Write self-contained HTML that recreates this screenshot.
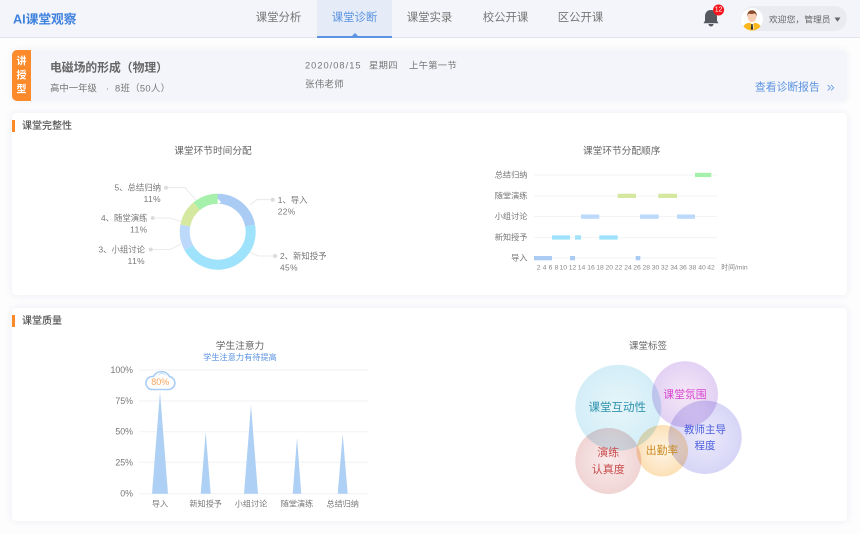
<!DOCTYPE html>
<html lang="zh">
<head>
<meta charset="utf-8">
<title>AI课堂观察</title>
<style>
html,body{margin:0;padding:0;width:860px;height:534px;overflow:hidden;background:#fdfdfe;}
body{position:relative;font-family:"Liberation Sans","Noto Sans CJK SC",sans-serif;color:#666;filter:blur(.3px);}
div{position:absolute;box-sizing:border-box;}
.hdr{left:0;top:0;width:860px;height:38px;background:#f4f5fa;border-bottom:1px solid #e2e3e8;}
.tab{top:0;height:38px;line-height:37px;font-size:11.4px;color:#777;text-align:center;width:75px;}
.tab.on{background:#e5ecf7;color:#5b93e0;border-bottom:2px solid #5b93e0;}
.card{background:#fff;border-radius:4px;box-shadow:0 0 8px rgba(60,70,110,.09);}
svg{position:absolute;left:0;top:0;}
text{font-family:"Liberation Sans","Noto Sans CJK SC",sans-serif;dominant-baseline:central;}
.b{mix-blend-mode:multiply;opacity:.88;}
</style>
</head>
<body>
<div class="hdr"></div>
<div class="tab" style="left:241px">课堂分析</div>
<div class="tab on" style="left:317px">课堂诊断</div>
<div class="tab" style="left:392px">课堂实录</div>
<div class="tab" style="left:468px">校公开课</div>
<div class="tab" style="left:543px">区公开课</div>
<div style="left:741px;top:6px;width:106px;height:25px;border-radius:13px;background:#eaebf1"></div>
<div style="left:12px;top:50px;width:835px;height:51px;background:#f4f5fa;border-radius:5px;box-shadow:0 0 7px rgba(60,70,110,.07)"></div>
<div style="left:12px;top:50px;width:19px;height:51px;background:#fd8a2a;border-radius:5px 0 0 5px"></div>
<div class="card" style="left:12px;top:113px;width:835px;height:182px"></div>
<div class="card" style="left:12px;top:308px;width:835px;height:213px"></div>
<div style="left:12px;top:120px;width:3px;height:12px;background:#fd8a2a"></div>
<div style="left:12px;top:315px;width:3px;height:12px;background:#fd8a2a"></div>

<svg width="860" height="534" viewBox="0 0 860 534" xmlns="http://www.w3.org/2000/svg">
<defs>
<radialGradient id="g1"><stop offset="0" stop-color="#e4f5fa"/><stop offset="1" stop-color="#cdebf6"/></radialGradient>
<radialGradient id="g2"><stop offset="0" stop-color="#f5e4f5"/><stop offset="1" stop-color="#dfcbf3"/></radialGradient>
<radialGradient id="g3"><stop offset="0" stop-color="#e9e7fa"/><stop offset="1" stop-color="#d2d0f5"/></radialGradient>
<radialGradient id="g4"><stop offset="0" stop-color="#fae8e8"/><stop offset="1" stop-color="#efcfcf"/></radialGradient>
<radialGradient id="g5"><stop offset="0" stop-color="#fef5e4"/><stop offset="1" stop-color="#fcdcac"/></radialGradient>
</defs>

<!-- header -->
<text x="13" y="19.5" font-size="12.7" font-weight="700" fill="#3f82de">AI课堂观察</text>
<path d="M352 36l3-3 3 3z" fill="#5b93e0"/>
<!-- bell -->
<path d="M711 10c-4.200 0-6 3-6 6.500v4.300l-1.500 2.400h15l-1.500-2.400v-4.300c0-3.500-1.800-6.500-6-6.500z" fill="#55585f"/>
<path d="M708.500 24h5a2.500 2.500 0 0 1-5 0z" fill="#55585f"/>
<circle cx="718.600" cy="10" r="5.500" fill="#f5141c"/>
<text x="718.600" y="10" font-size="7" fill="#fff" text-anchor="middle">12</text>
<!-- avatar -->
<circle cx="752" cy="19" r="11" fill="#fff"/>
<path d="M743.500 26.500c1-3 4-3.800 8.500-3.800s7.500.8 8.500 3.800a11 11 0 0 1-17 0z" fill="#fbb81e"/>
<path d="M749.500 22.500h5l-1.200 1.600.6 4.500-1.400 1.200-1.400-1.200.6-4.500z" fill="#fff"/>
<path d="M751.400 24h1.200l.5 5-1.100.9-1.100-.9z" fill="#2b2b2b"/>
<ellipse cx="752" cy="17" rx="4.300" ry="5.200" fill="#f6cdb1"/>
<path d="M747.300 17c-.6-4.500 1.900-6.800 4.700-6.800s5.300 2.300 4.700 6.800c-.4-2.200-1.100-3.200-2.200-3.600-1.700.8-4.800.6-5.800.4-.8.600-1.200 1.500-1.400 3.200z" fill="#8a4a2a"/>
<text x="769" y="19.500" font-size="8.800" fill="#666">欢迎您&#xFF0C;管理员</text>
<path d="M834.500 17.500h6l-3 4.200z" fill="#666"/>

<!-- info -->
<text x="21.500" y="62" font-size="10" font-weight="700" fill="#fff" text-anchor="middle">讲</text>
<text x="21.500" y="76" font-size="10" font-weight="700" fill="#fff" text-anchor="middle">授</text>
<text x="21.500" y="90" font-size="10" font-weight="700" fill="#fff" text-anchor="middle">型</text>
<text x="50" y="67.500" font-size="11.800" font-weight="700" fill="#666">电磁场的形成&#xFF08;物理&#xFF09;</text>
<g font-size="9.400" fill="#777">
<text x="50" y="88">高中一年级</text>
<text x="106" y="88">·</text>
<text x="115" y="88" letter-spacing=".3">8班&#xFF08;50人&#xFF09;</text>
</g>
<g font-size="9.300" fill="#777">
<text x="305" y="65.500" letter-spacing="1">2020/08/15</text>
<text x="369" y="65.500" letter-spacing=".3">星期四</text>
<text x="409" y="65.500" letter-spacing=".3">上午第一节</text>
</g>
<text x="305" y="85" font-size="9.500" fill="#777" letter-spacing=".2">张伟老师</text>
<text x="755" y="87.500" font-size="10.800" fill="#5b93e0">查看诊断报告</text>
<path d="M827.700 85l2.700 2.700-2.700 2.700M831 85l2.700 2.700-2.700 2.700" fill="none" stroke="#6d9fe4" stroke-width=".9"/>

<!-- section titles -->
<text x="22" y="126.500" font-size="10" font-weight="500" fill="#555">课堂完整性</text>
<text x="22" y="321.500" font-size="10" font-weight="500" fill="#555">课堂质量</text>

<!-- donut -->
<text x="213" y="151.500" font-size="9.700" fill="#666" text-anchor="middle">课堂环节时间分配</text>
<g transform="rotate(-90 217.700 231.700)" fill="none" stroke-width="10">
<circle cx="217.700" cy="231.700" r="33" pathLength="100" stroke="#aaccf4" stroke-dasharray="22 78"/>
<circle cx="217.700" cy="231.700" r="33" pathLength="100" stroke="#9ee2fb" stroke-dasharray="45 55" stroke-dashoffset="-22"/>
<circle cx="217.700" cy="231.700" r="33" pathLength="100" stroke="#bcd9fb" stroke-dasharray="11 89" stroke-dashoffset="-67"/>
<circle cx="217.700" cy="231.700" r="33" pathLength="100" stroke="#d5e8a0" stroke-dasharray="11 89" stroke-dashoffset="-78"/>
<circle cx="217.700" cy="231.700" r="33" pathLength="100" stroke="#a5f0aa" stroke-dasharray="11 89" stroke-dashoffset="-89"/>
</g>
<g fill="none" stroke="#e6e6e6" stroke-width=".8">
<path d="M250 205l7-5.300h15.500"/><path d="M250 252l8 4h17"/><path d="M181 244l-11 5.500h-19"/><path d="M182 222l-12-4h-17"/><path d="M196 200l-11-12.300h-19"/>
</g>
<g fill="#dcdcdc">
<circle cx="272.700" cy="199.700" r="2"/><circle cx="275" cy="256" r="2"/><circle cx="150.700" cy="249.500" r="2"/><circle cx="152.700" cy="218" r="2"/><circle cx="166" cy="187.700" r="2"/>
</g>
<g font-size="8.400" fill="#777">
<text x="277.700" y="200">1、导入</text><text x="277.700" y="211.500" letter-spacing=".4">22%</text>
<text x="280" y="256">2、新知授予</text><text x="280" y="267.500" letter-spacing=".4">45%</text>
<text x="145" y="249.500" text-anchor="end">3、小组讨论</text><text x="145" y="261" text-anchor="end" letter-spacing=".4">11%</text>
<text x="147.500" y="218" text-anchor="end">4、随堂演练</text><text x="147.500" y="229.500" text-anchor="end" letter-spacing=".4">11%</text>
<text x="161" y="187.700" text-anchor="end">5、总结归纳</text><text x="161" y="199" text-anchor="end" letter-spacing=".4">11%</text>
</g>

<!-- gantt -->
<text x="621.700" y="151.500" font-size="9.700" fill="#666" text-anchor="middle">课堂环节分配顺序</text>
<g stroke="#f2f3f5" stroke-width="1">
<path d="M534 175h183M534 196h183M534 216.500h183M534 237.500h183M534 258h183"/>
</g>
<g font-size="8.200" fill="#777" text-anchor="end">
<text x="527.500" y="175">总结归纳</text><text x="527.500" y="196">随堂演练</text><text x="527.500" y="216.700">小组讨论</text><text x="527.500" y="237.300">新知授予</text><text x="527.500" y="258">导入</text>
</g>
<g fill="#aaccf4"><rect x="534" y="256" width="18" height="4.300"/><rect x="570" y="256" width="5" height="4.300"/><rect x="635.700" y="256" width="4.600" height="4.300"/></g>
<g fill="#9ee2fb"><rect x="552" y="235.300" width="18" height="4.300"/><rect x="575" y="235.300" width="6" height="4.300"/><rect x="599.300" y="235.300" width="18.400" height="4.300"/></g>
<g fill="#bcd9fb"><rect x="581" y="214.500" width="18.300" height="4.300"/><rect x="640" y="214.500" width="18.700" height="4.300"/><rect x="677" y="214.500" width="18" height="4.300"/></g>
<g fill="#d5e8a0"><rect x="617.700" y="193.700" width="18.300" height="4.300"/><rect x="658.300" y="193.700" width="18.700" height="4.300"/></g>
<rect x="695" y="172.800" width="16.300" height="4.300" fill="#a5f0aa"/>
<g font-size="6.800" fill="#888" text-anchor="middle">
<text x="538.700" y="268">2</text><text x="544.600" y="268">4</text><text x="550.500" y="268">6</text><text x="556.500" y="268">8</text><text x="563.300" y="268">10</text><text x="572.500" y="268">12</text><text x="581.500" y="268">14</text><text x="591" y="268">16</text><text x="600" y="268">18</text><text x="609.300" y="268">20</text><text x="618.500" y="268">22</text><text x="628" y="268">24</text><text x="637" y="268">26</text><text x="646.300" y="268">28</text><text x="655.500" y="268">30</text><text x="664.700" y="268">32</text><text x="674" y="268">34</text><text x="683" y="268">36</text><text x="692.500" y="268">38</text><text x="702" y="268">40</text><text x="711" y="268">42</text>
<text x="734.500" y="268">时间/min</text>
</g>

<!-- attention chart -->
<text x="240" y="346.500" font-size="9.700" fill="#666" text-anchor="middle">学生注意力</text>
<text x="240" y="357.500" font-size="8.200" fill="#5b93e0" text-anchor="middle">学生注意力有待提高</text>
<path d="M139 370h229M139 401h229M139 431.700h229M139 462.300h229M139 493.700h229" stroke="#f1f2f4" stroke-width="1"/>
<g font-size="8.800" fill="#777" text-anchor="end">
<text x="133" y="370">100%</text><text x="133" y="401">75%</text><text x="133" y="431.700">50%</text><text x="133" y="462.300">25%</text><text x="133" y="493.500">0%</text>
</g>
<g fill="#aed0f5">
<path d="M160 391.700l8 102h-16z"/>
<path d="M205.700 431.700l5 62h-10z"/>
<path d="M251 405l7 88.700h-14z"/>
<path d="M297 438l4.300 55.700h-8.600z"/>
<path d="M342.700 434l5 59.700h-10z"/>
</g>
<g font-size="8.100" fill="#777" text-anchor="middle">
<text x="160" y="504">导入</text><text x="205.700" y="504">新知授予</text><text x="251" y="504">小组讨论</text><text x="297" y="504">随堂演练</text><text x="342.700" y="504">总结归纳</text>
</g>
<path d="M151.500 389.500H168.500A6.500 6.500 0 0 0 169.500 376.600A9 9 0 0 0 153.500 376.500A6.500 6.500 0 0 0 151.500 389.500Z" fill="#fff" stroke="#a9cdf5" stroke-width="1.600"/>
<path d="M158.500 375.500a4 4 0 0 1 7 0" fill="none" stroke="#c6def8" stroke-width=".8"/>
<text x="160.300" y="382" font-size="9" fill="#f9a55a" text-anchor="middle">80%</text>

<!-- bubbles -->
<text x="648" y="346.500" font-size="9.500" fill="#666" text-anchor="middle">课堂标签</text>
<circle class="b" cx="685" cy="394.300" r="33" fill="url(#g2)"/>
<circle class="b" cx="618.300" cy="407.700" r="43" fill="url(#g1)"/>
<circle class="b" cx="705" cy="437.300" r="36.700" fill="url(#g3)"/>
<circle class="b" cx="608.300" cy="461" r="33" fill="url(#g4)"/>
<circle class="b" cx="662.300" cy="450.700" r="25.700" fill="url(#g5)"/>
<g text-anchor="middle">
<text x="617.300" y="408" font-size="11.500" fill="#2e93ad">课堂互动性</text>
<text x="685" y="395" font-size="10.800" fill="#d843cf">课堂氛围</text>
<text x="705" y="430" font-size="10.500" fill="#4d60e0">教师主导</text>
<text x="705" y="446" font-size="10.500" fill="#4d60e0">程度</text>
<text x="608.300" y="453" font-size="11" fill="#c84c4c">演练</text>
<text x="608.300" y="470" font-size="11" fill="#c84c4c">认真度</text>
<text x="662" y="451" font-size="10.800" fill="#c98a1e">出勤率</text>
</g>
</svg>
</body>
</html>
